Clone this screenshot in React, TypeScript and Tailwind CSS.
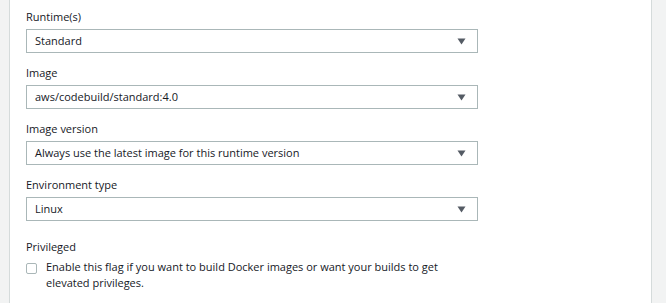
import React from "react";

function Caret() {
  return (
    <svg width="9" height="7" viewBox="0 0 9 7" className="shrink-0">
      <path d="M0.5 0.5 H8.5 L4.5 6.5 Z" fill="#545b64" />
    </svg>
  );
}

function Field({ label, value }: { label: string; value: string }) {
  return (
    <div className="flex flex-col">
      <div className="h-4 leading-4 text-[11px] text-[#16191f]">{label}</div>
      <div className="mt-1 flex h-6 w-[452px] items-center justify-between border border-[#aab7b8] bg-white pl-2 pr-[11px] text-[11px] text-[#16191f]">
        <span>{value}</span>
        <Caret />
      </div>
    </div>
  );
}

export default function App() {
  return (
    <div
      className="flex h-[303px] w-[666px] overflow-hidden bg-white"
      style={{ fontFamily: '"Open Sans", "Liberation Sans", Arial, sans-serif' }}
    >
      <div className="w-[10px] shrink-0 border-r border-[#d5dbdb] bg-[#f2f3f3]" />
      <div className="flex w-[641px] flex-col gap-3 pl-4 pt-[9px]">
        <Field label="Runtime(s)" value="Standard" />
        <Field label="Image" value="aws/codebuild/standard:4.0" />
        <Field label="Image version" value="Always use the latest image for this runtime version" />
        <Field label="Environment type" value="Linux" />
        <div className="mt-[6px] flex flex-col">
          <div className="h-4 leading-4 text-[11px] text-[#16191f]">Privileged</div>
          <div className="mt-1 flex items-start gap-[9px]">
            <div className="mt-[4px] h-[11px] w-[11px] shrink-0 rounded-[2px] border border-[#aab7b8] bg-white" />
            <div className="w-[405px] text-[11px] leading-4 text-[#16191f]">
              Enable this flag if you want to build Docker images or want your builds to get elevated privileges.
            </div>
          </div>
        </div>
      </div>
      <div className="flex-1 border-l border-[#d5dbdb] bg-[#f2f3f3]" />
    </div>
  );
}
